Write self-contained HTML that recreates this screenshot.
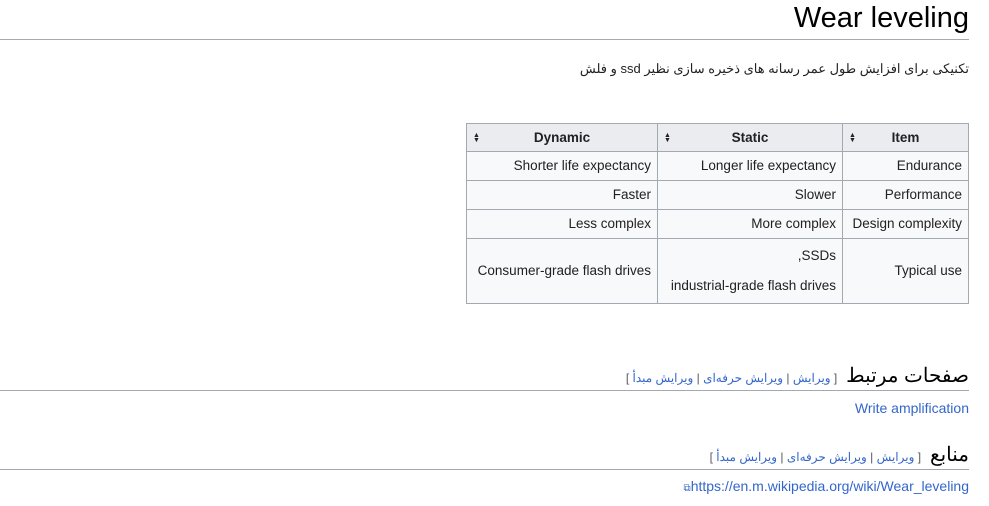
<!DOCTYPE html>
<html><head><meta charset="utf-8"><style>
body{margin:0;width:989px;height:506px;background:#fff;font-family:"Liberation Sans","Noto Sans CJK SC",sans-serif;color:#202122;position:relative;overflow:hidden}
.a{position:absolute}
.r{text-align:right;direction:rtl;white-space:nowrap}
a{color:#3366cc;text-decoration:none}
table{position:absolute;left:466px;top:123px;width:503px;border-collapse:collapse;font-size:13.5px;direction:rtl;table-layout:fixed}
td,th{border:1px solid #a2a9b1;padding:0 6px;text-align:right;background:#f8f9fa;height:28px;line-height:16px;white-space:nowrap;overflow:hidden;box-sizing:border-box}
th{background:#eaecf0;font-weight:bold;text-align:center;position:relative}
th span{position:absolute;left:6px;top:9px;font-size:7px;line-height:5px}
.line{position:absolute;left:0;width:969px;height:1px;background:#a2a9b1}
.ed{font-size:12px;color:#54595d}
</style></head><body>
<div class="a" style="right:20px;top:2px;font-size:29px;color:#000">Wear leveling</div>
<div class="line" style="top:39px"></div>
<div class="a r" style="right:20px;top:61px;font-size:13px;">تکنیکی برای افزایش طول عمر رسانه های ذخیره سازی نظیر ssd و فلش</div>
<table>
<colgroup><col style="width:126px"><col style="width:185px"><col style="width:191px"></colgroup>
<tr><th>Item<span>▲<br>▼</span></th><th>Static<span>▲<br>▼</span></th><th>Dynamic<span>▲<br>▼</span></th></tr>
<tr><td style="height:29px">Endurance</td><td>Longer life expectancy</td><td>Shorter life expectancy</td></tr>
<tr><td style="height:29px">Performance</td><td>Slower</td><td>Faster</td></tr>
<tr><td style="height:29px">Design complexity</td><td>More complex</td><td>Less complex</td></tr>
<tr><td style="height:65px">Typical use</td><td style="line-height:30px">SSDs,<br>industrial-grade flash drives</td><td>Consumer-grade flash drives</td></tr>
</table>
<div class="a r" style="right:20px;top:363px;font-size:20px;color:#000">صفحات مرتبط <span class="ed">&nbsp;[ <a>ویرایش</a> | <a>ویرایش حرفه‌ای</a> | <a>ویرایش مبدأ</a> ]</span></div>
<div class="line" style="top:390px"></div>
<div class="a" style="right:20px;top:400px;font-size:14px"><a>Write amplification</a></div>
<div class="a r" style="right:20px;top:442px;font-size:20px;color:#000">منابع <span class="ed">&nbsp;[ <a>ویرایش</a> | <a>ویرایش حرفه‌ای</a> | <a>ویرایش مبدأ</a> ]</span></div>
<div class="line" style="top:469px"></div>
<div class="a" style="right:20px;top:478px;font-size:14px;white-space:nowrap"><a><span style="font-size:10px">⧉</span>https://en.m.wikipedia.org/wiki/Wear_leveling</a></div>
</body></html>
